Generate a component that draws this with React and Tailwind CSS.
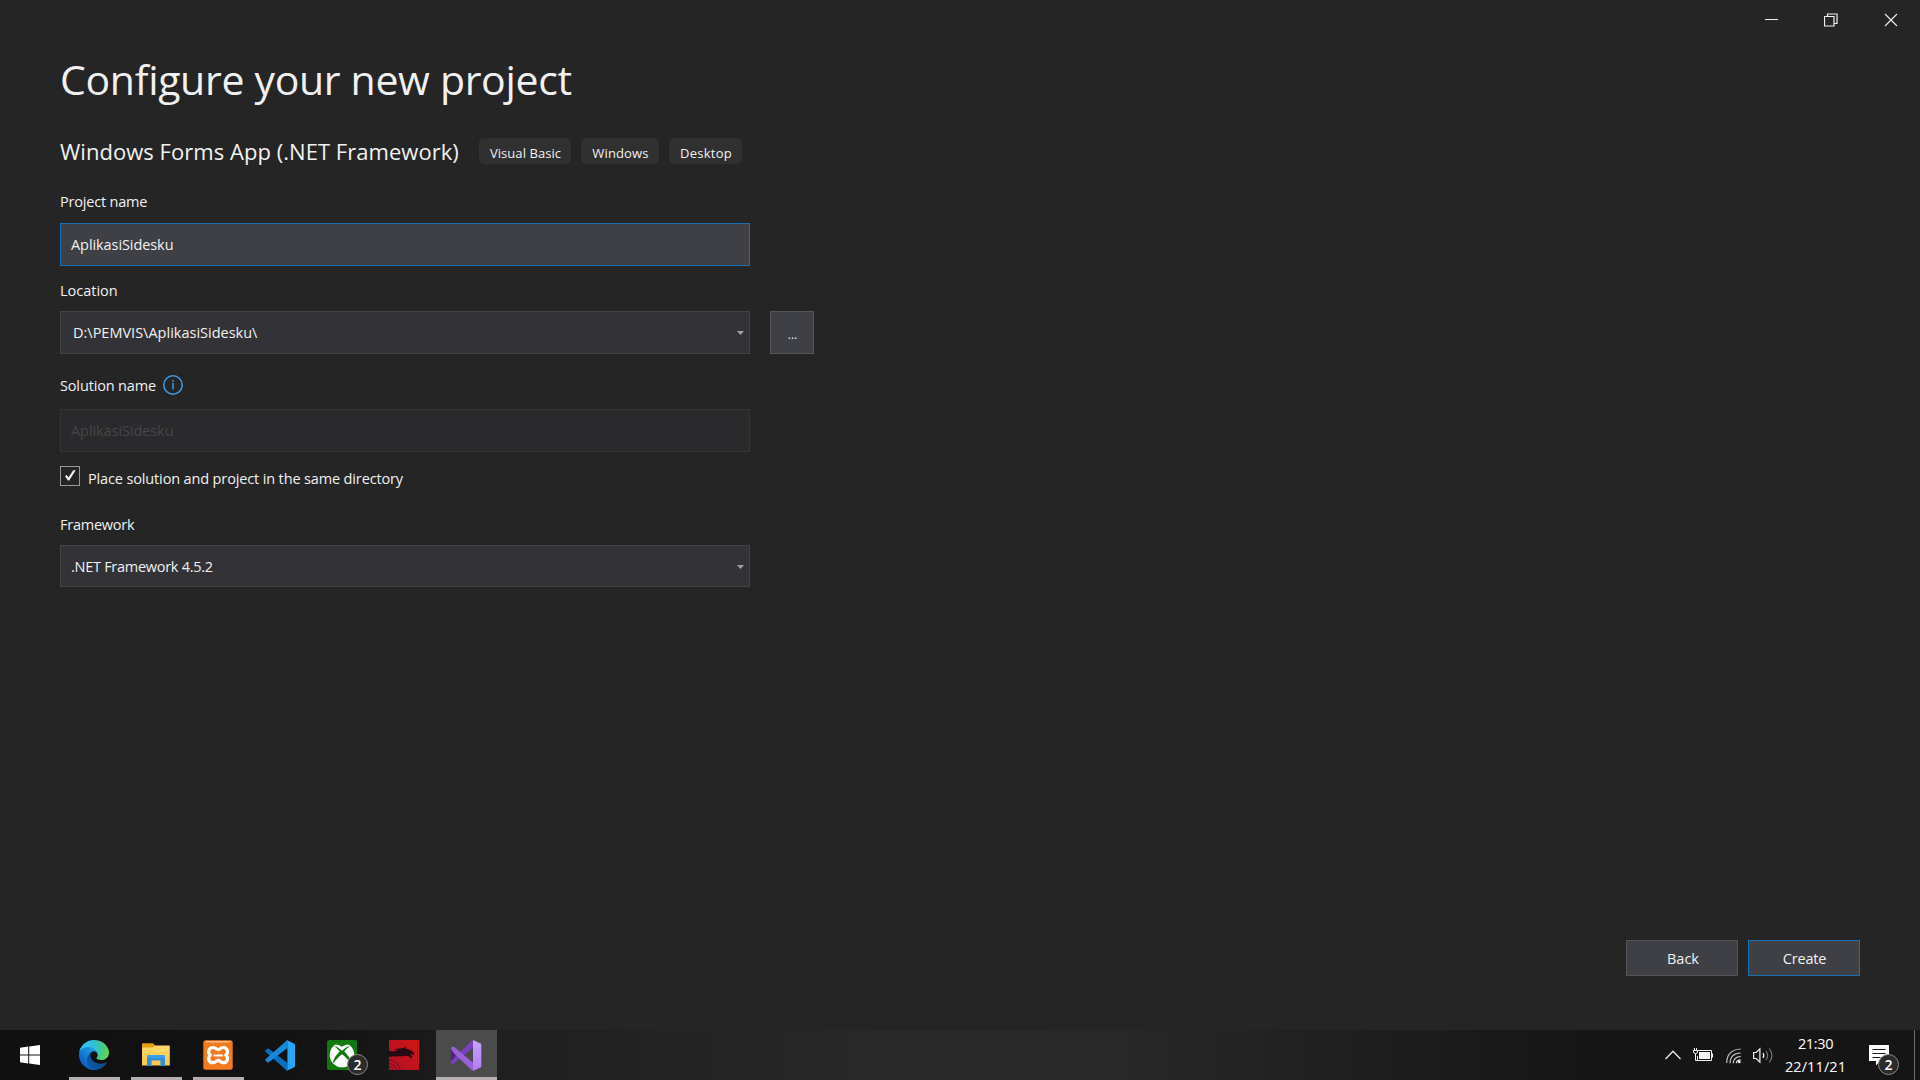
import React from "react";

function Label({ children, className = "" }) {
  return <div className={`h-5 text-[14.5px] leading-5 whitespace-nowrap ${className}`}>{children}</div>;
}

function Caret() {
  return (
    <svg className="mr-[5px] h-1 w-[7px]" viewBox="0 0 7 4">
      <path d="M0 0h7L3.5 4z" fill="#a0a0a0" />
    </svg>
  );
}

function Tag({ children, className }) {
  return (
    <span className={`flex h-[26px] items-center justify-center rounded-[5px] bg-[#303031] pt-[3px] pl-px text-[13px] leading-[22px] ${className}`}>
      {children}
    </span>
  );
}

function WindowControls() {
  return (
    <div className="flex h-10 shrink-0 justify-end">
      <button className="flex h-10 w-[60px] justify-center pt-[13px]">
        <svg width="15" height="14" viewBox="0 0 15 14">
          <path d="M1 6.5h13" stroke="#f1f1f1" />
        </svg>
      </button>
      <button className="flex h-10 w-[60px] justify-center pt-[13px]">
        <svg width="14" height="14" viewBox="0 0 14 14" fill="none" stroke="#f1f1f1">
          <path d="M.5 3.500h9.500v9.500h-9.500z" strokeWidth="1.200" />
          <path d="M3.500 3.500v-2.500h9.500v9.500h-3" strokeWidth="1.200" />
        </svg>
      </button>
      <button className="flex h-10 w-[59px] justify-center pt-[13px]">
        <svg width="14" height="14" viewBox="0 0 14 14" stroke="#f1f1f1" strokeWidth="1.1">
          <path d="M1 1l12 12M13 1L1 13" />
        </svg>
      </button>
    </div>
  );
}

function WindowsLogo() {
  return (
    <svg width="20" height="20" viewBox="0 0 20 20" fill="#fff">
      <path d="M0 2.8L8.2 1.6V9.5H0zM9.2 1.5L20 0V9.5H9.2zM0 10.5H8.2V18.4L0 17.2zM9.2 10.5H20V20L9.2 18.5z" />
    </svg>
  );
}

function EdgeLogo() {
  return (
    <svg width="30" height="30" viewBox="0 0 256 256">
      <defs>
        <linearGradient id="edgeDark" x1="63" y1="178" x2="241" y2="178" gradientUnits="userSpaceOnUse">
          <stop offset="0" stopColor="#0c59a4" />
          <stop offset="1" stopColor="#114a8b" />
        </linearGradient>
        <linearGradient id="edgeBlue" x1="157" y1="100" x2="46" y2="221" gradientUnits="userSpaceOnUse">
          <stop offset="0" stopColor="#1b9de2" />
          <stop offset=".5" stopColor="#1283d9" />
          <stop offset="1" stopColor="#0a5fc4" />
        </linearGradient>
        <radialGradient id="edgeGreen" cx="26" cy="45" r="245" gradientUnits="userSpaceOnUse">
          <stop offset="0" stopColor="#35c1f1" />
          <stop offset=".4" stopColor="#2fc0df" />
          <stop offset=".7" stopColor="#42c98f" />
          <stop offset="1" stopColor="#66d742" />
        </radialGradient>
      </defs>
      <path fill="url(#edgeDark)" d="M231 190.500a93.700 93.700 0 0 1-10.500 4.700 101.900 101.900 0 0 1-35.900 6.400c-47.300 0-88.500-32.500-88.500-74.300a31.500 31.500 0 0 1 16.400-27.300c-42.800 1.800-53.800 46.400-53.800 72.500 0 73.900 68.100 81.400 82.800 81.400 7.900 0 19.800-2.300 27-4.600l1.300-.4a128.300 128.300 0 0 0 66.600-52.800 4 4 0 0 0-5.400-5.600z" />
      <path fill="url(#edgeBlue)" d="M105.700 241.400a79.200 79.200 0 0 1-22.700-21.300 80.700 80.700 0 0 1 29.500-120c3.200-1.500 8.500-4.100 15.600-4a32.400 32.400 0 0 1 25.700 13 31.900 31.900 0 0 1 6.300 18.700c0-.2 24.500-79.600-80-79.600C36.200 48.200.1 89.800.1 126.300A130 130 0 0 0 12.300 182 128 128 0 0 0 168.600 248.700a75.600 75.600 0 0 1-62.800-7.300z" />
      <path fill="url(#edgeGreen)" d="M152.300 148.900c-.9 1-3.400 2.500-3.400 5.600 0 2.600 1.700 5.200 4.800 7.300 14.400 10.100 41.700 8.700 41.800 8.700a60 60 0 0 0 30.400-8.400 61.400 61.400 0 0 0 30.400-52.900c.3-22.400-8-37.300-11.300-43.900C223.800 23.900 177.700.300 127.600.300A128 128 0 0 0-.4 126.500C.1 90 36.400 60.500 79.600 60.500c3.500 0 23.500.3 42 10.100 16.300 8.600 24.900 18.900 30.800 29.200 6.200 10.700 7.300 24.100 7.300 29.500 0 5.300-2.700 13.200-7.400 19.600z" />
    </svg>
  );
}

function FolderLogo() {
  return (
    <svg width="28" height="24" viewBox="0 0 28 24">
      <defs>
        <linearGradient id="folder" x1="0" y1="0" x2="0" y2="1">
          <stop offset="0" stopColor="#ffd971" />
          <stop offset="1" stopColor="#fbc847" />
        </linearGradient>
      </defs>
      <path d="M0 1.200Q0 .3 1 .3h10l2.600 2.900-2.200 2.400H0z" fill="#e3a10c" />
      <path d="M0 4.600h10.500l2.500-2.200h14q.8 0 .8.900V22.600H0z" fill="url(#folder)" />
      <path d="M5 23V14q0-2 2-2h14q2 0 2 2v9h-4.600v-5.600H9.600V23z" fill="#2c8fe0" />
      <path d="M5 14q0-2 2-2h14q2 0 2 2v1H5z" fill="#3ba0ec" />
    </svg>
  );
}

function XamppLogo() {
  return (
    <svg width="30" height="30" viewBox="0 0 30 30">
      <rect x=".3" y=".3" width="29.400" height="29.400" rx="2.500" fill="#f47a20" />
      <rect x="3" y="1" width="24" height="1.500" rx=".7" fill="#fbb98a" />
      <g fill="none" stroke="#fff" strokeLinejoin="round" strokeLinecap="round">
        <path strokeWidth="3.200" d="M10.200 7.500c2.600 0 3.300 2.200 4.900 2.200s2.300-2.200 4.900-2.200c4.700 0 6 5.200 2.700 7.700 3.300 2.500 2 7.500-2.700 7.500-2.600 0-3.300-2.300-4.900-2.300s-2.300 2.300-4.900 2.300c-4.700 0-6-5-2.700-7.500-3.300-2.500-2-7.700 2.700-7.700z" />
        <path strokeWidth="2.200" d="M11.500 15.500h7.500" />
      </g>
    </svg>
  );
}

function VSCodeLogo() {
  return (
    <svg width="30" height="31" viewBox="0 0 30 31">
      <path d="M.7 10.200l1.700-1.500q.7-.5 1.400 0L22.500 23v7.600q-.8-.1-1.300-.6L.7 12q-.8-.9 0-1.800z" fill="#0a70bd" />
      <path d="M.7 20.700l1.700 1.500q.7.5 1.400 0L22.500 8V.4q-.8 0-1.300.6L.7 18.900q-.8.9 0 1.800z" fill="#178bd8" />
      <path d="M22.200.3l6.700 3.100q1.100.6 1.100 1.700v20.700q0 1.100-1.100 1.700l-6.700 3.100q-1 .3-1.700-.4 1.900 1 1.900-1.200V2q0-2.200-1.900-1.200.7-.8 1.700-.5z" fill="#2aa5f5" />
    </svg>
  );
}

function XboxLogo() {
  return (
    <svg width="30" height="30" viewBox="0 0 30 30">
      <rect width="30" height="30" rx="2" fill="#0f780f" />
      <circle cx="15" cy="15" r="12.300" fill="#fff" />
      <path d="M8 4.700c2-.8 5 .7 7 2.100 2-1.400 5-2.900 7-2.100-1.500-1.700-4-2.300-7-2.300s-5.500.6-7 2.300z" fill="#0f780f" />
      <path d="M7 6.200c2.300-.4 5.700 2.100 8 4.600 2.300-2.500 5.700-5 8-4.600-2 .8-4.200 3.300-5.700 5.100 4.200 4.400 7.500 9.500 6.200 12.200C22 20.300 18.400 16.700 15 14.200c-3.400 2.500-7 6.100-8.500 9.300-1.300-2.700 2-7.800 6.200-12.200C11.200 9.500 9 7 7 6.200z" fill="#0f780f" />
    </svg>
  );
}

function DragonLogo() {
  return (
    <svg width="30" height="30" viewBox="0 0 30 30">
      <defs>
        <linearGradient id="dragon" x1="0" y1="1" x2="1" y2="0">
          <stop offset="0" stopColor="#b01124" />
          <stop offset="1" stopColor="#cf1616" />
        </linearGradient>
      </defs>
      <rect width="30" height="30" fill="url(#dragon)" />
      <path d="M0 10.500L3 11.500 9 10.500 5.500 9l7.500-.8L17.500 7l-1 1.800c3 0 6 1.600 8.700 4.200l-.6 2.200-2-1.200-1.600.6 2.300 1.600-1.300 2.300-2.200-2.300-3.800-.4c-1.400.8-3.500.6-5.500.2C8 16.500 6 17 4.500 16 3 17 1.500 17 0 16.500z" fill="#260b14" />
      <path d="M0 20c4.500-.5 9.500 2.500 11 10M0 23.500c3.500 0 6.500 2.500 7.500 6.500M0 27c2 0 3.500 1 4 3" fill="none" stroke="#7a0d2a" strokeWidth="1" />
    </svg>
  );
}

function VisualStudioLogo() {
  return (
    <svg width="31" height="31" viewBox="0 0 31 31">
      <defs>
        <linearGradient id="vsRight" x1="0" y1="0" x2="0" y2="1">
          <stop offset="0" stopColor="#c9a2ff" />
          <stop offset="1" stopColor="#b07df3" />
        </linearGradient>
      </defs>
      <path d="M0 8.200Q0 7 1.200 7L4 9.300v12.400L1.500 24.200Q0 24 0 22.800z" fill="#52218a" />
      <path d="M0 22.800Q.2 24.500 2 24.200L22 7.800V.6q-1-.3-2 .6L2.500 18.700 0 21z" fill="#7a3fc0" />
      <path d="M0 8.200Q.2 6.600 2 6.800l1.300.3L22 22.700v7.700q-1 .2-2-.8L2 12.300z" fill="#9a61da" />
      <path d="M22 .4q.5-.3 1 0l6.600 3.200q.7.400.7 1.300v21.200q0 .9-.7 1.300L23 30.600q-.5.200-1 0z" fill="url(#vsRight)" />
    </svg>
  );
}

function TaskItem({ children, underline, active }) {
  return (
    <div className={`flex h-[50px] w-[61px] flex-col items-center ${active ? "bg-[#4b4b4b]" : ""}`}>
      <div className="flex h-[47px] items-center justify-center pt-[3px] pr-px">{children}</div>
      {underline && <div className={`h-[3px] bg-[#b5aeb2] ${active ? "w-[61px]" : "w-[51px]"}`} />}
    </div>
  );
}

function Badge({ className }) {
  return (
    <span className={`absolute flex h-[21px] w-[21px] items-center justify-center rounded-full border border-[#8a8a8a] bg-[#2b2b2b] text-[14px] leading-none font-semibold text-white ${className}`}>
      2
    </span>
  );
}

function Taskbar() {
  return (
    <div className="flex h-[50px] shrink-0 bg-[linear-gradient(90deg,#101010_0,#131313_320px,#1f1f1f_500px,#292929_900px,#282828_1120px,#1f1f1f_1350px,#161616_1580px,#151515_1920px)]">
      <div className="flex w-[64px] items-center pl-5">
        <WindowsLogo />
      </div>
      <TaskItem underline><EdgeLogo /></TaskItem>
      <div className="w-px" />
      <TaskItem underline><FolderLogo /></TaskItem>
      <div className="w-px" />
      <TaskItem underline><XamppLogo /></TaskItem>
      <div className="w-px" />
      <TaskItem><VSCodeLogo /></TaskItem>
      <div className="w-px" />
      <TaskItem>
        <div className="relative">
          <XboxLogo />
          <Badge className="top-[14px] left-[20px]" />
        </div>
      </TaskItem>
      <div className="w-px" />
      <TaskItem><DragonLogo /></TaskItem>
      <div className="w-px" />
      <TaskItem active underline><VisualStudioLogo /></TaskItem>

      <div className="ml-auto flex text-white">
        <svg className="mt-5 mr-[12px]" width="16" height="10" viewBox="0 0 16 10" fill="none" stroke="#e8e8e8" strokeWidth="1.400">
          <path d="M.5 9L8 1.300 15.500 9" />
        </svg>
        <svg className="mt-[18px] mr-[13px]" width="20" height="14" viewBox="0 0 20 14" fill="none" stroke="#f4f4f4">
          <path d="M5 2.500h13.500v10H4.500V8M19.500 5.500v4" />
          <path d="M6 4h11v7H6z" fill="#f4f4f4" stroke="none" />
          <path d="M1.500 0v2M3.500 0v2M.5 2.500h4V4q0 1.500-2 1.500T.5 4zM2.500 6v6.500H5" />
        </svg>
        <svg className="mt-[18px] mr-[12px]" width="15" height="16" viewBox="0 0 15 16" fill="none" strokeWidth="1.200">
          <path d="M.7 15Q1 1.700 14.700 1M4 15.200Q4.300 5.200 14.700 5" stroke="#bdbdbd" />
          <path d="M7.200 15.200Q7.700 8.800 14.700 8.500M10.300 15.200Q10.600 12 14.700 11.800" stroke="#d6d6d6" />
          <circle cx="13.300" cy="13.900" r="1.400" fill="#fff" />
        </svg>
        <svg className="mt-[17px] mr-[11px]" width="21" height="17" viewBox="0 0 21 17" fill="none" strokeWidth="1.200">
          <path d="M.6 5.500h2.500l3.800-3.700v13.400l-3.800-3.700H.6z" stroke="#f1f1f1" />
          <path d="M10 6q1.700 2.500 0 5" stroke="#f1f1f1" />
          <path d="M13 4q3.200 4.500 0 9M16.300 1.500q5.200 7 0 14" stroke="#777" />
        </svg>
        <div className="flex w-[61px] flex-col items-center pt-[2px] text-[14.5px] leading-[23px]">
          <span className="tracking-[-0.35px]">21:30</span>
          <span className="tracking-[0.1px]">22/11/21</span>
        </div>
        <div className="relative mt-[15px] ml-[23px] h-[30px] w-[45px]">
          <svg width="20" height="21" viewBox="0 0 20 21">
            <path d="M0 0h20v16H11l-4 4.500V16H0z" fill="#fff" />
            <path d="M3.500 4.500h13M3.500 8.500h13M3.500 12.500h8" stroke="#1a1a1a" />
          </svg>
          <Badge className="top-[9px] left-[9px]" />
        </div>
        <div className="mr-[5px] h-[50px] w-px bg-[#6b6b6b]" />
      </div>
    </div>
  );
}

export default function App() {
  return (
    <div className="flex h-[1080px] w-[1920px] flex-col overflow-hidden bg-[#252526] font-['Open_Sans','Noto_Sans',sans-serif] text-[#f1f1f1]">
      <WindowControls />
      <main className="flex flex-1 flex-col pl-[60px]">
        <h1 className="mt-[11px] h-14 text-[41px] leading-[56px] tracking-[-0.32px]">Configure your new project</h1>

        <div className="mt-[31px] flex h-[26px]">
          <h2 className="w-[419px] text-[22px] leading-[26px] tracking-[0.04px] whitespace-nowrap">Windows Forms App (.NET Framework)</h2>
          <div className="flex gap-[10px]">
            <Tag className="w-[92px] tracking-[0.07px]">Visual Basic</Tag>
            <Tag className="w-[78px] tracking-[0.15px]">Windows</Tag>
            <Tag className="w-[73px] tracking-[0.25px]">Desktop</Tag>
          </div>
        </div>

        <Label className="mt-[28px] tracking-[-0.2px]">Project name</Label>
        <div className="mt-[11px] flex h-[43px] w-[690px] items-center border border-[#1a6fb0] bg-[#3f3f46] pl-[10px]">
          <Label className="tracking-[-0.08px]">AplikasiSidesku</Label>
        </div>

        <Label className="mt-[15px]">Location</Label>
        <div className="mt-[10px] flex gap-5">
          <div className="flex h-[43px] w-[690px] items-center justify-between border border-[#434346] bg-[#333337] pl-3">
            <Label>D:\PEMVIS\AplikasiSidesku\</Label>
            <Caret />
          </div>
          <button className="flex h-[43px] w-11 items-center justify-center border border-[#555558] bg-[#3f3f46] pt-[4px] pl-px text-[12px]">...</button>
        </div>

        <div className="mt-[21px] flex h-5 items-center">
          <Label className="mt-[2px] w-[103px] tracking-[-0.15px]">Solution name</Label>
          <svg width="20" height="20" viewBox="0 0 20 20" fill="none" stroke="#3f9be8">
            <circle cx="10" cy="10" r="9.200" strokeWidth="1.500" />
            <path d="M10 8v6.500M10 5v1.800" strokeWidth="1.500" />
          </svg>
        </div>
        <div className="mt-[14px] flex h-[43px] w-[690px] items-center border border-[#353537] bg-[#2a2a2c] pl-[10px] text-[#454548]">
          <Label className="tracking-[-0.08px]">AplikasiSidesku</Label>
        </div>

        <div className="mt-[14px] flex h-[22px]">
          <div className="h-5 w-5 border border-[#999]">
            <svg width="18" height="18" viewBox="0 0 18 18">
              <path d="M4 9.200L5.800 7.900 7.500 10.500 12.200 3.200h2.500L8.200 13.500H7z" fill="#f1f1f1" />
            </svg>
          </div>
          <Label className="mt-[3px] ml-2 tracking-[-0.14px]">Place solution and project in the same directory</Label>
        </div>

        <Label className="mt-[27px] tracking-[-0.25px]">Framework</Label>
        <div className="mt-[10px] flex h-[42px] w-[690px] items-center justify-between border border-[#434346] bg-[#333337] pt-px pl-[10px]">
          <Label className="tracking-[-0.28px]">.NET Framework 4.5.2</Label>
          <Caret />
        </div>

        <div className="mt-auto mr-[60px] mb-[54px] flex justify-end gap-[10px]">
          <button className="flex h-9 w-28 items-center justify-center border border-[#555558] bg-[#3f3f46] pt-[2px] pl-[2px]">
            <Label>Back</Label>
          </button>
          <button className="flex h-9 w-28 items-center justify-center border border-[#1a6fb0] bg-[#3f3f46] pt-[2px] pl-px">
            <Label className="tracking-[-0.2px]">Create</Label>
          </button>
        </div>
      </main>
      <Taskbar />
    </div>
  );
}
